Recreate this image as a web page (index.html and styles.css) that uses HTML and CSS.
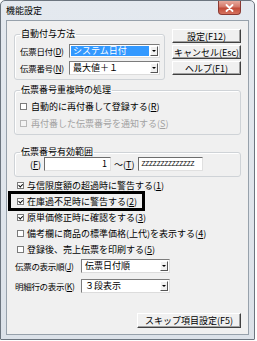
FILE: index.html
```html
<!DOCTYPE html>
<html lang="ja">
<head>
    <meta charset="UTF-8">
    <title>機能設定</title>
    <link rel="stylesheet" href="styles.css">
</head>
<body>
    <div class="window">
        <div class="titlebar">
            <span class="title">機能設定</span>
            <button class="close-btn" aria-label="閉じる">
                <svg width="9" height="8" viewBox="0 0 9 8">
                    <path d="M1.5 1L7.5 7M7.5 1L1.5 7" stroke="#fff" stroke-width="1.8" stroke-linecap="round"></path>
                </svg>
            </button>
        </div>

        <div class="client">
            <div class="top-row">
                <fieldset class="group group-auto">
                    <legend>自動付与方法</legend>
                    <div class="field-row">
                        <label class="field-label">伝票日付(<u>D</u>)</label>
                        <div class="combo combo-wide focused">
                            <span class="combo-text">システム日付</span>
                            <span class="combo-arrow"></span>
                        </div>
                    </div>
                    <div class="field-row">
                        <label class="field-label">伝票番号(<u>N</u>)</label>
                        <div class="combo combo-wide">
                            <span class="combo-text">最大値＋１</span>
                            <span class="combo-arrow"></span>
                        </div>
                    </div>
                </fieldset>

                <div class="side-buttons">
                    <button class="btn">設定(F12)</button>
                    <button class="btn">キャンセル(Esc)</button>
                    <button class="btn">ヘルプ(F1)</button>
                </div>
            </div>

            <fieldset class="group group-dup">
                <legend>伝票番号重複時の処理</legend>
                <div class="check-row">
                    <span class="check"></span>
                    <span>自動的に再付番して登録する(<u>R</u>)</span>
                </div>
                <div class="check-row disabled">
                    <span class="check"></span>
                    <span>再付番した伝票番号を通知する(<u>S</u>)</span>
                </div>
            </fieldset>

            <fieldset class="group group-range">
                <legend>伝票番号有効範囲</legend>
                <div class="range-row">
                    <span>(<u>F</u>)</span>
                    <div class="textbox textbox-from">1</div>
                    <span class="range-to">～(<u>T</u>)</span>
                    <div class="textbox textbox-to">ZZZZZZZZZZZZZZ</div>
                </div>
            </fieldset>

            <div class="check-list">
                <div class="check-row">
                    <span class="check checked"></span>
                    <span>与信限度額の超過時に警告する(<u>1</u>)</span>
                </div>
                <div class="check-row callout">
                    <span class="check checked"></span>
                    <span>在庫過不足時に警告する(<u>2</u>)</span>
                </div>
                <div class="check-row">
                    <span class="check checked"></span>
                    <span>原単価修正時に確認をする(<u>3</u>)</span>
                </div>
                <div class="check-row">
                    <span class="check"></span>
                    <span>備考欄に商品の標準価格(上代)を表示する(<u>4</u>)</span>
                </div>
                <div class="check-row">
                    <span class="check"></span>
                    <span>登録後、売上伝票を印刷する(<u>5</u>)</span>
                </div>
            </div>

            <div class="select-rows">
                <div class="field-row">
                    <label class="field-label">伝票の表示順(<u>J</u>)</label>
                    <div class="combo combo-short">
                        <span class="combo-text">伝票日付順</span>
                        <span class="combo-arrow"></span>
                    </div>
                </div>
                <div class="field-row">
                    <label class="field-label">明細行の表示(<u>K</u>)</label>
                    <div class="combo combo-short">
                        <span class="combo-text">３段表示</span>
                        <span class="combo-arrow"></span>
                    </div>
                </div>
            </div>

            <button class="btn btn-skip">スキップ項目設定(F5)</button>
        </div>
    </div>
</body>
</html>
```

FILE: styles.css
```css
* {
    margin: 0;
    padding: 0;
    box-sizing: border-box;
}

body {
    background: #fff;
    font-family: "Noto Sans CJK JP", "Liberation Sans", sans-serif;
    font-size: 9px;
    color: #000;
}

u {
    text-decoration: underline;
    text-underline-offset: 1px;
}

/* ウィンドウ枠 */
.window {
    width: 255px;
    height: 340px;
    border: 1px solid #6c757f;
    border-radius: 5px 5px 1px 1px;
    background: linear-gradient(to bottom, #e4e9ef, #dce2e9);
    display: flex;
    flex-direction: column;
    padding: 0 5px 4px;
}

.titlebar {
    height: 19px;
    display: flex;
    align-items: flex-start;
    justify-content: space-between;
}

.title {
    font-size: 9px;
    line-height: 19px;
}

.close-btn {
    width: 23px;
    height: 14px;
    margin-right: 8px;
    border: 1px solid #8b3a33;
    border-top: none;
    border-radius: 0 0 4px 4px;
    background: linear-gradient(to bottom, #e8a99c 0%, #d47869 45%, #c24b38 55%, #d6735f 100%);
    display: flex;
    align-items: center;
    justify-content: center;
}

.client {
    flex: 1;
    background: #f0f0f0;
    border: 1px solid #97a1ab;
    padding: 8px 7px 6px;
    display: flex;
    flex-direction: column;
}

/* グループ枠 */
.group {
    border: 1px solid #cfd3d7;
    border-radius: 3px;
    padding: 0 5px 4px;
    box-shadow: inset 1px 1px 0 #fff;
}

.group legend {
    line-height: 10px;
    padding: 0 1px;
}

.top-row {
    display: flex;
    justify-content: space-between;
    align-items: flex-start;
}

.group-auto {
    width: 151px;
    padding-top: 5px;
    padding-right: 4px;
    display: flex;
    flex-direction: column;
    gap: 3px;
}

.side-buttons {
    width: 69px;
    display: flex;
    flex-direction: column;
    gap: 2px;
}

.btn {
    height: 14px;
    font-family: inherit;
    font-size: 9px;
    white-space: nowrap;
    background: #f0f0f0;
    border: 1px solid;
    border-color: #fff #404040 #404040 #fff;
    box-shadow: inset -1px -1px 0 #a0a0a0;
    display: flex;
    align-items: center;
    justify-content: center;
}

.field-row {
    height: 14px;
    display: flex;
    align-items: center;
}

.field-label {
    flex: 1;
    min-width: 0;
    white-space: nowrap;
    font-size: 8.5px;
    letter-spacing: -0.3px;
}

.combo {
    height: 14px;
    flex-shrink: 0;
    background: #fff;
    border: 1px solid;
    border-color: #7c7c7c #dcdcdc #dcdcdc #7c7c7c;
    display: flex;
    align-items: center;
    padding: 1px;
}

.combo-wide {
    width: 91px;
}

.combo-short {
    width: 89px;
}

.combo-text {
    flex: 1;
    height: 100%;
    line-height: 10px;
    padding-left: 2px;
    white-space: nowrap;
}

.combo.focused .combo-text {
    background: #3399ff;
    color: #fff;
}

.combo-arrow {
    width: 8px;
    height: 10px;
    margin-left: 1px;
    background: #f0f0f0;
    border: 1px solid;
    border-color: #fff #555 #555 #fff;
    display: flex;
    align-items: center;
    justify-content: center;
}

.combo-arrow::after {
    content: "";
    border-left: 2px solid transparent;
    border-right: 2px solid transparent;
    border-top: 2px solid #000;
}

.group-dup {
    margin-top: 5px;
    padding-top: 4px;
    display: flex;
    flex-direction: column;
    gap: 3px;
}

.check-row {
    height: 14px;
    display: flex;
    align-items: center;
    gap: 3px;
    white-space: nowrap;
}

.check {
    width: 7px;
    height: 7px;
    flex-shrink: 0;
    background: #fff;
    border: 1px solid #7b7b7b;
    display: flex;
    align-items: center;
    justify-content: center;
}

.check.checked::after {
    content: "";
    width: 3px;
    height: 2px;
    border-left: 1.3px solid #000;
    border-bottom: 1.3px solid #000;
    transform: rotate(-45deg) translate(0, -0.5px);
}

.group-dup .check-row {
    gap: 4px;
}

.check-row.disabled {
    color: #a2a2a2;
}

.check-row.disabled .check {
    border-color: #b8b8b8;
    background: #f4f4f4;
}

.group-range {
    margin-top: 12px;
    padding-bottom: 5px;
}

.range-row {
    height: 14px;
    padding-left: 10px;
    display: flex;
    align-items: center;
    white-space: nowrap;
}

.textbox {
    height: 14px;
    background: #fff;
    border: 1px solid;
    border-color: #6d6d6d #e0e0e0 #e0e0e0 #6d6d6d;
    line-height: 12px;
    padding: 0 3px;
}

.textbox-from {
    width: 67px;
    margin-left: 3px;
    text-align: right;
}

.range-to {
    margin-left: 3px;
}

.textbox-to {
    width: 65px;
    margin-left: 3px;
    font-family: "Liberation Sans", sans-serif;
    font-size: 6.5px;
    letter-spacing: -0.2px;
    overflow: hidden;
}

/* チェックボックス一覧 */
.check-list {
    display: flex;
    flex-direction: column;
}

.check-list .check-row {
    height: 16px;
    padding-left: 3px;
}

.check-list .callout {
    margin-left: -4px;
    padding-left: 7px;
    width: 133px;
    outline: 3px solid #000;
    outline-offset: -1px;
}

.select-rows {
    width: 156px;
    margin-top: 2px;
    padding-left: 1px;
    display: flex;
    flex-direction: column;
    gap: 6px;
}

.btn-skip {
    width: 104px;
    height: 15px;
    margin-top: auto;
    align-self: flex-end;
}
```
